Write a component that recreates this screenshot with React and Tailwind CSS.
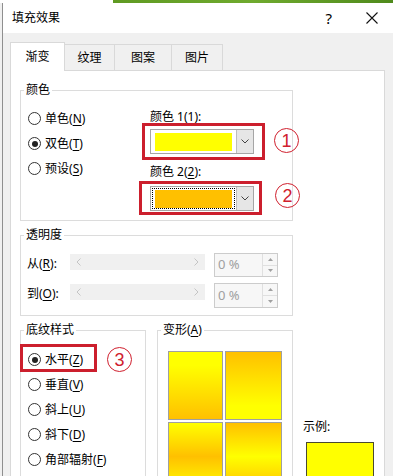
import React from "react";

const F = "font-['Noto_Sans','Noto_Sans_CJK_SC',sans-serif]";

function Radio({ checked, label, k }) {
  return (
    <div className="flex items-center h-[25px]">
      <span className="w-[13px] h-[13px] rounded-full border border-[#333] bg-white flex items-center justify-center shrink-0">
        {checked && <span className="w-[6px] h-[6px] rounded-full bg-[#222]" />}
      </span>
      <span className="ml-[4px] leading-[16px]">
        {label}(<span className="underline underline-offset-2">{k}</span>)
      </span>
    </div>
  );
}

function Legend({ children }) {
  return <legend className="ml-[3px] px-[2px] leading-[16px] text-[12px]">{children}</legend>;
}

function Chevron() {
  return (
    <svg width="8" height="5" viewBox="0 0 8 5">
      <path d="M0.5 0.5 L4 4 L7.5 0.5" fill="none" stroke="#444" strokeWidth="1" />
    </svg>
  );
}

function Combo({ color, focus }) {
  return (
    <div className="flex w-[104px] h-[25px] border border-[#a6a6a6] bg-white">
      <div className="flex-1 p-[1px]">
        <div className={`w-full h-full flex items-center px-[2px] ${focus ? "border border-dotted border-black" : "border border-transparent"}`}>
          <div className="w-full h-[18px]" style={{ background: color }} />
        </div>
      </div>
      <div className="w-[17px] h-full bg-[#e6e6e6] border-l border-[#bdbdbd] flex items-center justify-center">
        <Chevron />
      </div>
    </div>
  );
}

function Slider() {
  return (
    <div className="w-[135px] h-[16px] bg-[#f0f0f0] flex items-center justify-between px-[6px]">
      <svg width="5" height="8" viewBox="0 0 5 8">
        <path d="M4.5 0.5 L1 4 L4.5 7.5" fill="none" stroke="#c4c4c4" strokeWidth="1" />
      </svg>
      <svg width="5" height="8" viewBox="0 0 5 8">
        <path d="M0.5 0.5 L4 4 L0.5 7.5" fill="none" stroke="#c4c4c4" strokeWidth="1" />
      </svg>
    </div>
  );
}

function Spinner({ h }) {
  return (
    <div className={`flex w-[64px] ${h} border border-[#cccccc] bg-[#f7f7f7]`}>
      <div className="flex-1 pl-[3px] flex items-center text-[#a0a0a0] text-[13px]">0 %</div>
      <div className="w-[15px] flex flex-col border-l border-[#e0e0e0]">
        <div className="flex-1 flex items-center justify-center border-b border-[#e0e0e0]">
          <svg width="5" height="3" viewBox="0 0 5 3"><path d="M0 3 L2.5 0 L5 3 Z" fill="#a0a0a0" /></svg>
        </div>
        <div className="flex-1 flex items-center justify-center">
          <svg width="5" height="3" viewBox="0 0 5 3"><path d="M0 0 L2.5 3 L5 0 Z" fill="#a0a0a0" /></svg>
        </div>
      </div>
    </div>
  );
}

function Num({ n, cls }) {
  return (
    <div className={`absolute w-[25px] h-[25px] rounded-full border-[1.5px] border-[#d0202e] flex items-center justify-center text-[#d0202e] text-[18px] leading-none font-['Liberation_Sans',sans-serif] ${cls}`}>
      {n}
    </div>
  );
}

export default function App() {
  return (
    <div className={`relative w-[393px] h-[476px] overflow-hidden bg-[#f0f0f0] text-[12px] text-black ${F}`}>
      {/* background strip */}
      <div className="flex h-[3px]">
        <div className="w-[113px] bg-white" />
        <div className="flex-1 bg-linear-to-r from-[#5f9a22] via-[#6faa2e] to-[#4f8a1c]" />
      </div>
      {/* dialog */}
      <div className="ml-[2px] border-l border-[#8f8f8f] h-[500px]">
        <div className="h-[30px] bg-white flex items-center pl-[9px] pr-[15px]">
          <span className="leading-[16px]">填充效果</span>
          <span className="ml-auto text-[15px] leading-none">?</span>
          <span className="ml-[34px]">
            <svg width="12" height="12" viewBox="0 0 12 12">
              <path d="M0.5 0.5 L11.5 11.5 M11.5 0.5 L0.5 11.5" stroke="#111" strokeWidth="1.1" />
            </svg>
          </span>
        </div>
        {/* tabs */}
        <div className="flex items-end ml-[7px] mt-[9px]">
          <div className="relative z-10 -mb-px w-[55px] h-[29px] bg-white border-l border-t border-r border-[#d9d9d9] flex items-center justify-center">
            渐变
          </div>
          <div className="w-[50px] h-[26px] border-t border-r border-[#d9d9d9] flex items-center justify-center">纹理</div>
          <div className="w-[57px] h-[26px] border-t border-r border-[#d9d9d9] flex items-center justify-center">图案</div>
          <div className="w-[51px] h-[26px] border-t border-r border-[#d9d9d9] flex items-center justify-center">图片</div>
        </div>
        {/* panel */}
        <div className="ml-[7px] w-[375px] h-[460px] bg-white border border-[#d9d9d9] pl-[9px] pt-[11px]">
          {/* 颜色 */}
          <fieldset className="w-[273px] h-[139px] border border-[#dcdcdc]">
            <Legend>颜色</Legend>
            <div className="flex items-start">
              <div className="pl-[7px] pt-[8px] w-[129px]">
                <Radio label="单色" k="N" />
                <Radio checked label="双色" k="T" />
                <Radio label="预设" k="S" />
              </div>
              <div className="pt-[11px]">
                <div className="leading-[16px]">
                  颜色 1(<span className="underline underline-offset-2">1</span>):
                </div>
                <div className="mt-[4px]">
                  <Combo color="#ffff00" />
                </div>
                <div className="leading-[16px] mt-[10px]">
                  颜色 2(<span className="underline underline-offset-2">2</span>):
                </div>
                <div className="mt-[6px]">
                  <Combo color="#ffc000" focus />
                </div>
              </div>
            </div>
          </fieldset>
          {/* 透明度 */}
          <fieldset className="mt-[6px] w-[273px] h-[89px] border border-[#dcdcdc]">
            <Legend>透明度</Legend>
            <div className="pt-[10px]">
              <div className="flex items-start h-[24px]">
                <div className="w-[49px] pl-[6px] mt-[3px] leading-[16px]">
                  从(<span className="underline underline-offset-2">R</span>):
                </div>
                <div className="mt-[1px]"><Slider /></div>
                <div className="ml-[9px]"><Spinner h="h-[24px]" /></div>
              </div>
              <div className="flex items-start h-[25px] mt-[6px]">
                <div className="w-[49px] pl-[6px] mt-[3px] leading-[16px]">
                  到(<span className="underline underline-offset-2">O</span>):
                </div>
                <div className="mt-[1px]"><Slider /></div>
                <div className="ml-[9px]"><Spinner h="h-[25px]" /></div>
              </div>
            </div>
          </fieldset>
          {/* bottom row */}
          <div className="mt-[6px] flex items-start">
            <fieldset className="w-[126px] h-[200px] border border-[#dcdcdc]">
              <Legend>底纹样式</Legend>
              <div className="pl-[7px] pt-[9px]">
                <Radio checked label="水平" k="Z" />
                <Radio label="垂直" k="V" />
                <Radio label="斜上" k="U" />
                <Radio label="斜下" k="D" />
                <Radio label="角部辐射" k="F" />
              </div>
            </fieldset>
            <fieldset className="ml-[11px] w-[136px] h-[200px] border border-[#dcdcdc]">
              <Legend>
                变形(<span className="underline underline-offset-2">A</span>)
              </Legend>
              <div className="pl-[10px] pt-[13px] grid grid-cols-[55px_57px] gap-[2px]">
                <div className="h-[69px] border border-[#a0a0a0] bg-linear-to-b from-[#ffff00] from-20% to-[#ffc000]" />
                <div className="h-[69px] border border-[#a0a0a0] bg-linear-to-b from-[#ffc000] to-[#ffff00] to-80%" />
                <div className="h-[69px] border border-[#a0a0a0] bg-linear-to-b from-[#ffff00] via-[#ffc000] to-[#ffff00]" />
                <div className="h-[69px] border border-[#a0a0a0] bg-linear-to-b from-[#ffc000] via-[#ffff00] to-[#ffc000]" />
              </div>
            </fieldset>
            <div className="ml-[10px] pt-[97px]">
              <div className="leading-[16px]">示例:</div>
              <div className="mt-[7px] ml-[3px] w-[68px] h-[80px] bg-[#ffff00] border border-[#4a4a30]" />
            </div>
          </div>
        </div>
      </div>

      {/* annotations */}
      <div className="absolute left-[142px] top-[123px] w-[123px] h-[37px] border-[3px] border-[#cc1f2d]" />
      <div className="absolute left-[139px] top-[181px] w-[123px] h-[34px] border-[3px] border-[#cc1f2d]" />
      <div className="absolute left-[20px] top-[344px] w-[77px] h-[28px] border-[3px] border-[#cc1f2d]" />
      <Num n="1" cls="left-[274px] top-[128px]" />
      <Num n="2" cls="left-[275px] top-[183px]" />
      <Num n="3" cls="left-[107px] top-[347px]" />
    </div>
  );
}
